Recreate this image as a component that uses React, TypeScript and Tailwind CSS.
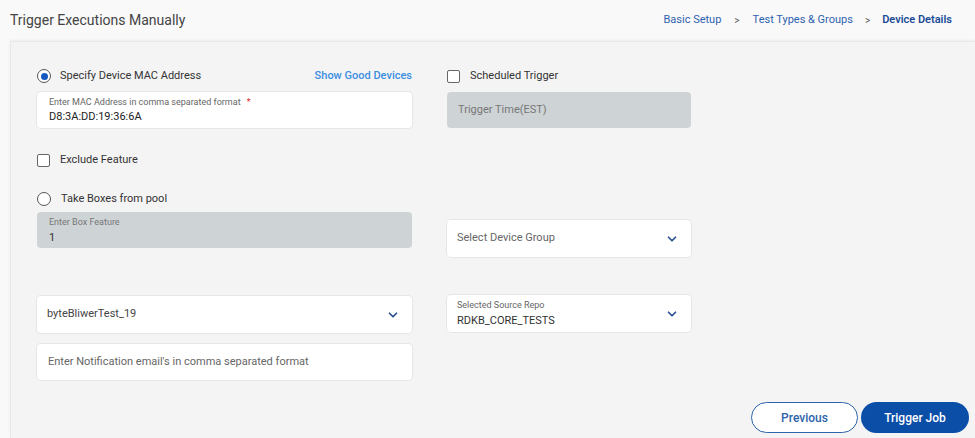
import { ChevronDown } from 'lucide-react';

const font = { fontFamily: 'Roboto, "Noto Sans", sans-serif' };

function Radio({ checked }: { checked: boolean }) {
  return (
    <span className="flex h-[14px] w-[14px] items-center justify-center rounded-full border-[1.5px] border-[#555] bg-white">
      {checked && <span className="h-[7px] w-[7px] rounded-full bg-[#1658c0]" />}
    </span>
  );
}

function Checkbox() {
  return <span className="block h-[13px] w-[13px] rounded-[2px] border border-[#666] bg-white" />;
}

function SelectBox({ label, value, placeholder }: { label?: string; value?: string; placeholder?: string }) {
  return (
    <div className="flex h-[37px] items-center justify-between rounded-[4px] bg-white pl-[10px] pr-[12px] shadow-[0_0_0_1px_#e6e6e6]">
      {label ? (
        <div className="flex flex-col leading-none">
          <span className="text-[9px] text-[#666]">{label}</span>
          <span className="mt-[5px] text-[11px] text-[#333]">{value}</span>
        </div>
      ) : (
        <span className={`text-[11px] ${value ? 'text-[#444]' : 'text-[#666]'}`}>{value ?? placeholder}</span>
      )}
      <ChevronDown size={14} strokeWidth={3} className="text-[#2d5090]" />
    </div>
  );
}

export default function App() {
  return (
    <div className="flex h-[438px] w-[975px] flex-col overflow-hidden bg-[#f9f9fa]" style={font}>
      <div className="flex h-[41px] shrink-0 items-center justify-between pl-[10px] pr-[23px]">
        <h1 className="text-[14px] text-[#444]">Trigger Executions Manually</h1>
        <nav className="flex items-center text-[11px] text-[#2f62ad]">
          <span>Basic Setup</span>
          <span className="mx-[13px] text-[10px] text-[#555]">&gt;</span>
          <span>Test Types &amp; Groups</span>
          <span className="mx-[12px] text-[10px] text-[#555]">&gt;</span>
          <span className="font-semibold text-[#1b4c96]">Device Details</span>
        </nav>
      </div>

      <div className="relative ml-[10px] flex flex-1 flex-col border-l border-t border-[#e8e8ea] bg-[#f4f4f4] pl-[26px] shadow-[0_-1px_3px_rgba(0,0,0,0.05)]">
        <div className="flex gap-[35px] pt-[27px]">
          {/* left column */}
          <div className="flex w-[375px] flex-col">
            <div className="flex h-[14px] items-center justify-between">
              <label className="flex items-center gap-[9px] text-[11px] text-[#333]">
                <Radio checked />
                Specify Device MAC Address
              </label>
              <span className="text-[11px] font-medium text-[#3b8ee0]">Show Good Devices</span>
            </div>
            <div className="mt-[9px] flex h-[36px] flex-col justify-center rounded-[4px] bg-white px-[12px] leading-none shadow-[0_0_0_1px_#e6e6e6]">
              <span className="text-[9px] text-[#666]">
                Enter MAC Address in comma separated format <span className="ml-[4px] text-[#e03030]">*</span>
              </span>
              <span className="mt-[4px] text-[11px] text-[#222]">D8:3A:DD:19:36:6A</span>
            </div>

            <label className="mt-[24px] flex items-center gap-[10px] text-[11px] text-[#333]">
              <Checkbox />
              Exclude Feature
            </label>

            <label className="mt-[22px] flex items-center gap-[10px] text-[11px] text-[#333]">
              <Radio checked={false} />
              Take Boxes from pool
            </label>
            <div className="mt-[5px] flex h-[36px] flex-col justify-center rounded-[4px] bg-[#ced3d5] px-[12px] leading-none">
              <span className="text-[9px] text-[#777]">Enter Box Feature</span>
              <span className="mt-[5px] text-[11px] text-[#333]">1</span>
            </div>

            <div className="mt-[48px]">
              <SelectBox value="byteBliwerTest_19" />
            </div>
            <div className="mt-[11px] flex h-[36px] items-center rounded-[4px] bg-white px-[11px] shadow-[0_0_0_1px_#e6e6e6]">
              <span className="text-[11px] text-[#666]">Enter Notification email's in comma separated format</span>
            </div>
          </div>

          {/* right column */}
          <div className="flex w-[244px] flex-col">
            <label className="flex h-[14px] items-center gap-[10px] text-[11px] text-[#333]">
              <Checkbox />
              Scheduled Trigger
            </label>
            <div className="mt-[9px] flex h-[36px] items-center rounded-[4px] bg-[#ced3d5] px-[11px]">
              <span className="text-[11px] text-[#777]">Trigger Time(EST)</span>
            </div>

            <div className="mt-[92px]">
              <SelectBox placeholder="Select Device Group" />
            </div>
            <div className="mt-[38px]">
              <SelectBox label="Selected Source Repo" value="RDKB_CORE_TESTS" />
            </div>
          </div>
        </div>

        <div className="mt-auto mb-[5px] flex justify-end gap-[3px] pr-[6px]">
          <button className="h-[31px] w-[107px] rounded-full border-[1.5px] border-[#2d63ab] bg-white text-[12px] font-medium text-[#2d63ab]">
            Previous
          </button>
          <button className="h-[31px] w-[108px] rounded-full bg-[#0a4ea8] text-[12px] font-medium text-white">
            Trigger Job
          </button>
        </div>
      </div>
    </div>
  );
}
